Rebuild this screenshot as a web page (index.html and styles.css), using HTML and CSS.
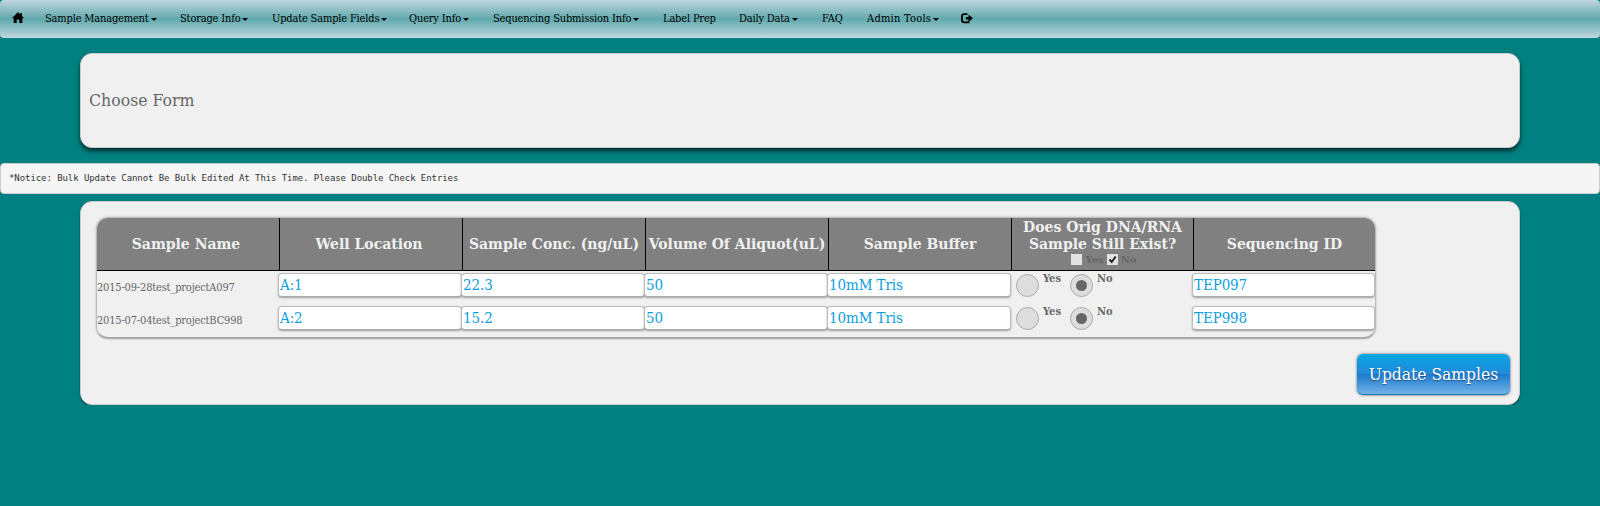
FILE: index.html
```
<!DOCTYPE html>
<html lang="en">
<head>
<meta charset="utf-8">
<title>Bulk Update</title>
<link rel="stylesheet" href="styles.css">
</head>
<body>
<nav class="nav">
  <a class="home"><svg class="icon" viewBox="0 0 12 12" width="12" height="12"><path d="M6 0 0 6.2h1.7V11h3V7.5h2.6V11h3V6.2H12L10 4.1V1H8.4v1.4z"/></svg></a>
  <a class="drop">Sample Management</a>
  <a class="drop">Storage Info</a>
  <a class="drop">Update Sample Fields</a>
  <a class="drop">Query Info</a>
  <a class="drop">Sequencing Submission Info</a>
  <a>Label Prep</a>
  <a class="drop">Daily Data</a>
  <a>FAQ</a>
  <a class="drop admin">Admin Tools</a>
  <a><svg class="icon" viewBox="0 0 12 11" width="12" height="11"><path d="M6.5 1.2H3.2Q1 1.2 1 3.2v4Q1 9.3 3.2 9.3H7.5V8" fill="none" stroke="#000" stroke-width="1.8"/><path d="M7.5 1.4 12 5.2 7.5 9V6.5H5V3.9h2.5z"/></svg></a>
</nav>
<section class="panel choose"><h1>Choose Form</h1></section>
<pre class="notice">*Notice: Bulk Update Cannot Be Bulk Edited At This Time. Please Double Check Entries</pre>
<section class="panel samples">
  <div class="table">
    <div class="row head">
      <div class="lead">Sample Name</div>
      <div class="lead">Well Location</div>
      <div>Sample Conc. (ng/uL)</div>
      <div>Volume Of Aliquot(uL)</div>
      <div>Sample Buffer</div>
      <div class="exist">
        <span>Does Orig DNA/RNA</span><span>Sample Still Exist?</span>
        <span class="checks"><i class="box"></i>Yes<i class="box"><svg viewBox="0 0 11 11" width="11" height="11"><path d="M2.5 5.5 4.7 8 8.7 2.5" fill="none" stroke="#222" stroke-width="2"/></svg></i>No</span>
      </div>
      <div>Sequencing ID</div>
    </div>
    <div class="row body">
      <div class="name">2015-09-28test_projectA097</div>
      <div class="field">A:1</div>
      <div class="field">22.3</div>
      <div class="field">50</div>
      <div class="field">10mM Tris</div>
      <div class="radios"><i class="radio"></i><b>Yes</b><i class="radio on"></i><b>No</b></div>
      <div class="field">TEP097</div>
    </div>
    <div class="row body">
      <div class="name">2015-07-04test_projectBC998</div>
      <div class="field">A:2</div>
      <div class="field">15.2</div>
      <div class="field">50</div>
      <div class="field">10mM Tris</div>
      <div class="radios"><i class="radio"></i><b>Yes</b><i class="radio on"></i><b>No</b></div>
      <div class="field">TEP998</div>
    </div>
  </div>
  <button class="update">Update Samples</button>
</section>
</body>
</html>
```

FILE: styles.css
```
* { box-sizing: border-box; }
body {
  margin: 0;
  background: #008080;
  font-family: Georgia, "DejaVu Serif Condensed", "DejaVu Serif", serif;
  color: #666;
}
.nav {
  height: 38px;
  border-radius: 4px;
  background: linear-gradient(#c0d6de, #60a9ad 50%, #c0d6de);
  display: grid;
  grid-template-columns: 33px 135px 92px 137px 84px 170px 76px 83px 45px 94px 20px;
  padding: 0 0 2px 12px;
  align-items: center;
  font-size: 11px;
  letter-spacing: -0.18px;
  color: #000;
  white-space: nowrap;
}
.nav a { display: flex; align-items: center; height: 36px; }
.nav .admin { letter-spacing: 0.25px; }
.icon { display: block; }
.drop::after {
  content: "";
  margin: 3px 0 0 2px;
  border: 3px solid transparent;
  border-top-color: #000;
  border-bottom: 0;
}
.panel {
  margin: 0 80px;
  background: #f0f0f0;
  border: 1px solid #ccc;
  border-radius: 12px;
}
.choose {
  margin-top: 15px;
  height: 95px;
  padding: 0 0 1px 8px;
  display: flex;
  align-items: center;
  box-shadow: 0 3px 4px rgba(0, 0, 0, .65);
}
.choose h1 { margin: 0; font-size: 17.5px; font-weight: normal; }
.notice {
  margin: 15px 0 7px;
  height: 31px;
  padding: 0 8px;
  border: 1px solid #ccc;
  border-radius: 4px;
  background: #f5f5f5;
  color: #333;
  font: 9px/28px "DejaVu Sans Mono", monospace;
  letter-spacing: -0.07px;
}
.samples {
  height: 204px;
  padding: 15px 9px 0 15px;
  box-shadow: 0 1px 2px rgba(0, 0, 0, .5);
}
.table {
  width: 1280px;
  height: 122px;
  border: 1px solid #bbb;
  border-bottom: 2px solid #aaa;
  border-radius: 12px;
  overflow: hidden;
  box-shadow: 0 0 2px #aaa;
}
.row { display: grid; grid-template-columns: 182px 183px 183px 183px 183px 182px 182px; }
.head {
  height: 53px;
  background: #808080;
  border-bottom: 1px solid #000;
  color: #f0f0f0;
  font-family: Georgia, "DejaVu Serif", serif;
  font-weight: bold;
  font-size: 14px;
  white-space: nowrap;
}
.head > div { display: flex; align-items: center; justify-content: center; }
.head > .lead { padding-right: 4px; }
.head > div + div { border-left: 1px solid #000; }
.head .exist { flex-direction: column; justify-content: flex-start; line-height: 17px; padding-top: 1px; }
.checks { display: flex; align-items: center; gap: 3px; height: 13px; padding-left: 3px; font-size: 10px; color: #666; }
.box { width: 11px; height: 11px; background: #e2e2e2; }
.box svg { display: block; }
.body { height: 33px; padding-top: 2px; }
.name { font-size: 11px; line-height: 30px; letter-spacing: -0.18px; white-space: nowrap; }
.field {
  height: 24px;
  margin-left: -1px;
  border: 1px solid #bbb;
  border-bottom-color: #aaa;
  border-radius: 4px;
  background: #fff;
  box-shadow: 0 1px 2px rgba(0, 0, 0, .35);
  color: #0b9ddd;
  font-size: 15px;
  letter-spacing: -0.1px;
  line-height: 23px;
  padding-left: 1px;
}
.radios { display: flex; padding: 1px 0 0 5px; font-size: 11px; }
.radios b { width: 31px; padding-left: 4px; line-height: 9px; }
.radio {
  width: 23px;
  height: 23px;
  border: 1px solid #aaa;
  border-radius: 50%;
  background: #ddd;
  display: flex;
  align-items: center;
  justify-content: center;
}
.on::before { content: ""; width: 11px; height: 11px; border-radius: 50%; background: #666; }
.update {
  display: block;
  margin: 15px 0 0 auto;
  width: 153px;
  height: 41px;
  padding: 0;
  border: 0;
  border-bottom: 1px solid #1879aa;
  border-radius: 6px;
  background: linear-gradient(#08a8e3, #2389d9 50%, #1b78cc 50%, #72b3e8);
  box-shadow: 0 0 2px 1px #aaa;
  color: #fff;
  font: 17.3px Georgia, "DejaVu Serif Condensed", "DejaVu Serif", serif;
  text-shadow: 0 1px 1px rgba(0, 0, 0, .4);
  white-space: nowrap;
}
```
